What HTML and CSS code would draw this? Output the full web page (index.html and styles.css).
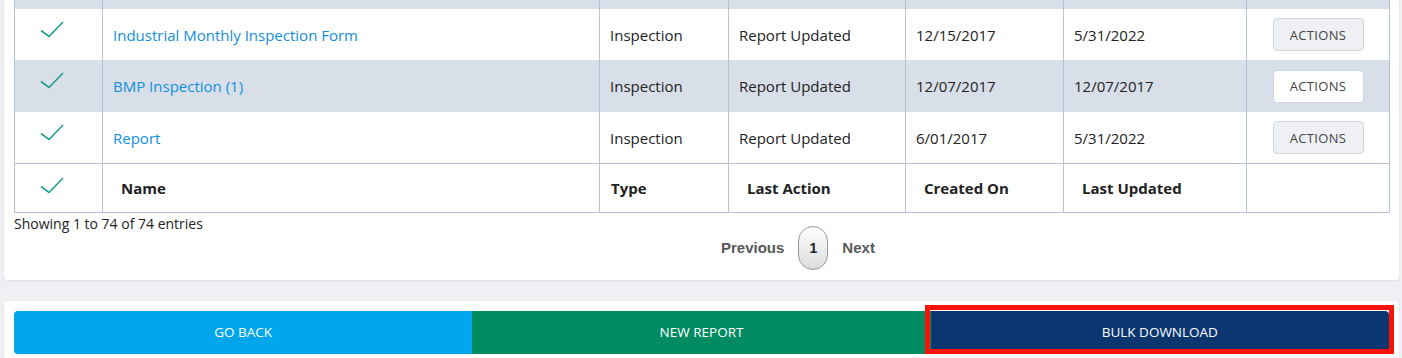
FILE: index.html
```html
<html>
<head>
	<title>Reports</title>
	<link rel="stylesheet" href="styles.css">
</head>
<body>
	<div class="panel">
		<table class="reportTable">
			<colgroup>
				<col style="width: 88px">
				<col style="width: 497px">
				<col style="width: 129px">
				<col style="width: 177px">
				<col style="width: 158px">
				<col style="width: 183px">
				<col style="width: 143px">
			</colgroup>
			<tbody>
				<tr class="odd">
					<td class="checkCell"></td>
					<td></td>
					<td></td>
					<td></td>
					<td></td>
					<td></td>
					<td class="actionCell"><button class="actionsButton"></button></td>
				</tr>
				<tr>
					<td class="checkCell"><svg class="check" width="24" height="17" viewBox="0 0 24 17"><polyline points="1,9.5 9,15.5 23,1" /></svg></td>
					<td><a href="#" class="reportLink">Industrial Monthly Inspection Form</a></td>
					<td>Inspection</td>
					<td>Report Updated</td>
					<td>12/15/2017</td>
					<td>5/31/2022</td>
					<td class="actionCell"><button class="actionsButton">ACTIONS</button></td>
				</tr>
				<tr class="odd">
					<td class="checkCell"><svg class="check" width="24" height="17" viewBox="0 0 24 17"><polyline points="1,9.5 9,15.5 23,1" /></svg></td>
					<td><a href="#" class="reportLink">BMP Inspection (1)</a></td>
					<td>Inspection</td>
					<td>Report Updated</td>
					<td>12/07/2017</td>
					<td>12/07/2017</td>
					<td class="actionCell"><button class="actionsButton">ACTIONS</button></td>
				</tr>
				<tr>
					<td class="checkCell"><svg class="check" width="24" height="17" viewBox="0 0 24 17"><polyline points="1,9.5 9,15.5 23,1" /></svg></td>
					<td><a href="#" class="reportLink">Report</a></td>
					<td>Inspection</td>
					<td>Report Updated</td>
					<td>6/01/2017</td>
					<td>5/31/2022</td>
					<td class="actionCell"><button class="actionsButton">ACTIONS</button></td>
				</tr>
			</tbody>
			<tfoot>
				<tr>
					<th class="checkCell"><svg class="check" width="24" height="17" viewBox="0 0 24 17"><polyline points="1,9.5 9,15.5 23,1" /></svg></th>
					<th>Name</th>
					<th class="typeHead">Type</th>
					<th>Last Action</th>
					<th>Created On</th>
					<th>Last Updated</th>
					<th></th>
				</tr>
			</tfoot>
		</table>
		<div class="tableFooter">
			<div class="tableInfo">Showing 1 to 74 of 74 entries</div>
			<div class="paginate">
				<a href="#" class="pageNav">Previous</a>
				<a href="#" class="pageNumber">1</a>
				<a href="#" class="pageNav">Next</a>
			</div>
		</div>
	</div>
	<div class="panel buttonPanel">
		<a href="#" class="bigButton goBack">GO BACK</a>
		<a href="#" class="bigButton newReport">NEW REPORT</a>
		<a href="#" class="bigButton bulkDownload">BULK DOWNLOAD<span class="highlightBox"></span></a>
	</div>
</body>
</html>
```

FILE: styles.css
```css
body {
	margin: 0;
	background: #eff0f4;
	font-family: "Open Sans", "Liberation Sans", sans-serif;
	color: #222;
	overflow: hidden;
}

.panel {
	background: white;
	margin: -43px 3px 0 4px;
	padding: 0 10px 10px 10px;
	border-radius: 4px;
	box-shadow: 0 1px 2px rgba(0, 0, 0, 0.07);
}

.reportTable {
	width: 100%;
	table-layout: fixed;
	border-collapse: collapse;
	border-left: 1px solid #b6c2d8;
	border-right: 1px solid #b6c2d8;
	border-bottom: 1px solid #b6c2d8;
	font-size: 15px;
}

.reportTable td, .reportTable th {
	height: 51.5px;
	padding: 1px 10px 0 10px;
	border-left: 1px solid #b6c2d8;
	text-align: left;
	vertical-align: middle;
	white-space: nowrap;
}

.reportTable tr.odd td {
	background: #d9dfe9;
}

.reportTable tfoot th {
	height: 49px;
	border-top: 1px solid #b6c2d8;
	padding-left: 18px;
	font-weight: bold;
	color: #222;
}

.reportTable tfoot th.typeHead {
	padding-left: 11px;
}

.reportTable .checkCell {
	vertical-align: top;
	padding: 12px 0 0 25px;
}

.reportTable tfoot th.checkCell {
	padding: 13px 0 0 25px;
}

.check {
	display: block;
}

.check polyline {
	fill: none;
	stroke: #1d9c8a;
	stroke-width: 1.6;
}

.reportLink {
	color: #128fdc;
	text-decoration: none;
}

.actionCell {
	text-align: center !important;
}

.actionsButton {
	width: 91px;
	height: 33px;
	background: #eef0f4;
	border: 1px solid #d0d6df;
	border-radius: 4px;
	font-family: "Open Sans", sans-serif;
	font-size: 13px;
	letter-spacing: 0.3px;
	color: #444;
	cursor: pointer;
}

.reportTable tr.odd .actionsButton {
	background: white;
}

.tableFooter {
	display: flex;
	align-items: flex-start;
}

.tableInfo {
	font-size: 14px;
	line-height: 22px;
	color: #222;
}

.paginate {
	flex: 1;
	display: flex;
	justify-content: center;
	align-items: center;
	gap: 14px;
	margin-top: 13px;
	padding-left: 4px;
	font-family: "Liberation Sans", Arial, sans-serif;
	font-weight: bold;
	font-size: 15px;
}

.pageNav {
	color: #585858;
	text-decoration: none;
}

.pageNumber {
	width: 28px;
	height: 42px;
	line-height: 42px;
	text-align: center;
	border: 1px solid #9a9a9a;
	border-radius: 15px;
	background: linear-gradient(#ffffff, #dcdcdc);
	color: #222;
	text-decoration: none;
	font-size: 14px;
}

.buttonPanel {
	margin-top: 21px;
	padding: 10px;
	display: flex;
}

.bigButton {
	flex: 1;
	height: 43px;
	line-height: 43px;
	text-align: center;
	color: white;
	text-decoration: none;
	font-size: 13.5px;
}

.goBack {
	background: #00a6ec;
	border-radius: 4px 0 0 4px;
}

.newReport {
	background: #008b60;
}

.bulkDownload {
	background: #0b3670;
	position: relative;
	border-radius: 0 4px 4px 0;
}

.highlightBox {
	position: absolute;
	top: -6px;
	left: -6px;
	right: -5px;
	bottom: 0;
	border: 5px solid #fb1306;
}
```
